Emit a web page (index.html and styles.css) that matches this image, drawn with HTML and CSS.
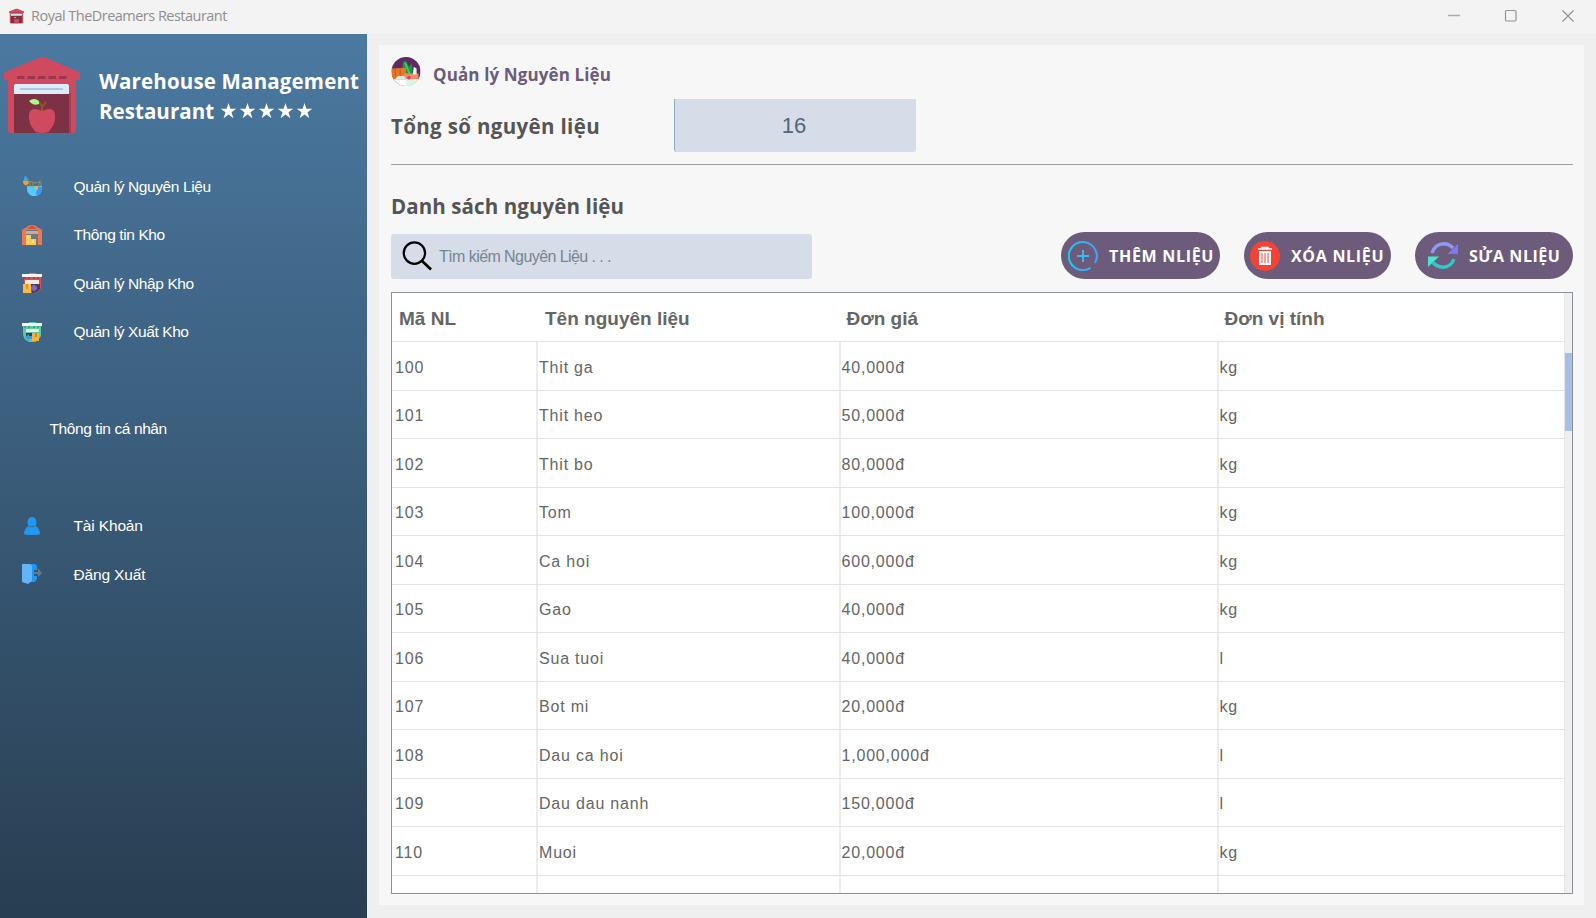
FILE: index.html
```
<!DOCTYPE html>
<html lang="vi">
<head>
<meta charset="utf-8">
<title>Royal TheDreamers Restaurant</title>
<link rel="stylesheet" href="styles.css">
</head>
<body>
<svg width="0" height="0" class="defs">
  <symbol id="store" viewBox="0 0 76 76">
    <path d="M4 20h68v53q0 3-3 3H7q-3 0-3-3z" fill="#cf4a5e"/>
    <path d="M37 0h3L73 14q3 1 3 3v4q0 2-3 2H3q-3 0-3-2v-4q0-2 3-3z" fill="#cf4a5e"/>
    <path d="M13 20.500h50" stroke="#9a394d" stroke-width="3" stroke-dasharray="7.500 3"/>
    <path d="M10 30h55v46H10z" fill="#7d3144"/>
    <path d="M65 36h2v40h-2z" fill="#a83d51"/>
    <path d="M10 37v-8q0-2 2-2h51q2 0 2 2v8z" fill="#dcecfa"/>
    <path d="M16 32h43" stroke="#afcae0" stroke-width="2"/>
    <path d="M38 54v-5l-3-4M38 50l4-5" fill="none" stroke="#8d5a26" stroke-width="2"/>
    <path d="M25 44q5-4 10 0v3q-5 2-8-1z" fill="#a5fa83"/>
    <path d="M38 54q11-5 13 3 1 9-5 16-1 3-8 3t-8-3q-6-7-5-16 2-8 13-3z" fill="#cf4a5e"/>
  </symbol>
</svg>
<header class="titlebar">
  <svg class="app-icon" viewBox="0 0 76 76"><use href="#store"/></svg>
  <span class="app-title">Royal TheDreamers Restaurant</span>
  <div class="controls">
    <svg viewBox="0 0 14 14"><path d="M1 6.500h12" stroke="#aaa" stroke-width="1.500"/></svg>
    <svg viewBox="0 0 14 14"><rect x="1.500" y="1.500" width="10.500" height="10.500" rx="1.200" fill="none" stroke="#949494" stroke-width="1.200"/></svg>
    <svg viewBox="0 0 14 14"><path d="M1.500 1.500l11 11M12.500 1.500l-11 11" stroke="#909090" stroke-width="1.100"/></svg>
  </div>
</header>
<div class="app">
  <aside class="sidebar">
    <div class="brand">
      <svg class="logo" viewBox="0 0 76 76"><use href="#store"/></svg>
      <div class="brand-text"><div class="b1">Warehouse Management</div><div class="b2">Restaurant <svg class="stars" viewBox="0 0 91 16"><defs><path id="star" d="M7.500 0l1.900 5.800h5.900L10.500 9.300l1.900 5.900-4.900-3.600-4.900 3.600 1.900-5.900L-.3 5.800h5.900z" fill="#fff"/></defs><use href="#star"/><use href="#star" x="19"/><use href="#star" x="38"/><use href="#star" x="57"/><use href="#star" x="76"/></svg></div></div>
    </div>
    <nav class="menu">
      <a class="item"><svg viewBox="0 0 20 20"><path d="M5 10h15v3q-1 6-6 7H10q-5-2-5-7z" fill="#55c8fc"/><path d="M16 11h4q1 5-5 9-2-4 1-9z" fill="#3797f5"/><path d="M6 5l8 2 5-2M8 6v5M11 6v5M18 5l-2 6M19 6v4" fill="none" stroke="#9b8c62"/><path d="M1 5q2-2 5 0l1 2q-2 3-4 2Q1 8 1 5z" fill="#f6a313"/><path d="M2 5V2q0-2 2-2l3 4z" fill="#35a5e8"/><path d="M13 10h3v3l-1 1q-2 0-2-2z" fill="#f5b13a"/></svg><span>Quản lý Nguyên Liệu</span></a>
      <a class="item"><svg viewBox="0 0 20 20"><path d="M0 5l8-5h4l8 5v15H0z" fill="#f0784f"/><path d="M5 4l5-4 5 4z" fill="#d8503a"/><path d="M4 5h12v15H4z" fill="#6f7780"/><path d="M4 6h12v3H4z" fill="#c8ac98"/><path d="M4 10h5v4h5v6H4z" fill="#f8ca58"/><path d="M6 11v3M11 15v3M6 16v2" stroke="#fff09a"/></svg><span>Thông tin Kho</span></a>
      <a class="item"><svg viewBox="0 0 20 20"><path d="M2 2h17v13q-2 4-6 5H2z" fill="#e24a61"/><path d="M0 1h20v3H0z" fill="#f3f3ef"/><path d="M7 0h7v1H7z" fill="#52b796"/><path d="M3 4v2M7 4v2M12 4v2M16 4v2" stroke="#7b3848"/><path d="M3 7h14v4H3z" fill="#f4ece4"/><path d="M9 11h9v5q-3 4-8 4z" fill="#404254"/><path d="M1 11h8v9H1z" fill="#f7bd43"/><path d="M5 11v5" stroke="#e78a28" stroke-width="2"/><path d="M9 15h6M12 12v6" stroke="#8166c6" stroke-width="3"/></svg><span>Quản lý Nhập Kho</span></a>
      <a class="item"><svg viewBox="0 0 20 20"><path d="M1 2h18v12q-2 4-6 6H7q-6-3-6-8z" fill="#59cda0"/><path d="M0 1h20v3H0z" fill="#f3f7f3"/><path d="M7 0h7v1H7z" fill="#4dcfa3"/><path d="M3 4v2M7 4v2M12 4v2M16 4v2" stroke="#347a66"/><path d="M4 7h13v3H4z" fill="#f2eee2"/><path d="M4 11h13v5H4z" fill="#373c4c"/><path d="M10 11h7v8h-7z" fill="#f7b13e"/><path d="M14 11v4" stroke="#df8324" stroke-width="2"/><path d="M3 15l4-3v2h3v3H7v2z" fill="#319be4"/></svg><span>Quản lý Xuất Kho</span></a>
      <div class="label">Thông tin cá nhân</div>
      <a class="item account"><svg viewBox="0 0 20 20"><path d="M10 1q4 0 4.500 5 0 4-2.500 4.500H8Q5.500 10 5.500 6 6 1 10 1zM6 10q4 2.500 8 0 4 3 4 8 0 1-8 1t-8-1q0-5 4-8z" fill="#2196f3"/></svg><span>Tài Khoản</span></a>
      <a class="item account"><svg viewBox="0 0 20 20"><path d="M6 0h7l2 2v4h-3v6h3v3l-2 3H6z" fill="#2196f3"/><path d="M0 0h7q3 0 3 3v14l-4 3-6-2z" fill="#64b5f6"/><path d="M11 8h5V4l4 5-4 4v-3h-5z" fill="#607d8b"/></svg><span>Đăng Xuất</span></a>
    </nav>
  </aside>
  <main class="panel">
    <div class="heading">
      <svg viewBox="0 0 30 30"><defs><clipPath id="disc"><circle cx="15" cy="15" r="15"/></clipPath></defs><g clip-path="url(#disc)"><path d="M0 0h30v30H0z" fill="#5e2a62"/><path d="M11 13L12 5l3-1 3 6 3-3 1 10-8 2z" fill="#159a42"/><path d="M14 6l5 12" stroke="#3fca61" stroke-width="2"/><path d="M0 12l15-1v12H0z" fill="#e77622"/><path d="M4 12v8M9 12v8" stroke="#ca5720"/><path d="M13 17h15v6H13z" fill="#f58b63"/><path d="M23 10l3 2v6h-4z" fill="#e8f0f4"/><path d="M0 23h30v7H0z" fill="#fff"/><path d="M15 23h15v7H15z" fill="#d8f7e9"/><path d="M4 23q3-5 6-3 3-2 5 3z" fill="#d4eee8"/><circle cx="18" cy="21.500" r="1.800" fill="#ef315d"/></g></svg>
      <h1>Quản lý Nguyên Liệu</h1>
    </div>
    <div class="total"><h2>Tổng số nguyên liệu</h2><div class="count">16</div></div>
    <h2 class="list-title">Danh sách nguyên liệu</h2>
    <div class="tools">
      <div class="search"><svg viewBox="0 0 32 32"><circle cx="12.800" cy="12.500" r="11" fill="none" stroke="#000" stroke-width="2.300"/><path d="M20.500 20.500l9.500 9" stroke="#000" stroke-width="2.800"/></svg><span>Tìm kiếm Nguyên Liệu . . .</span></div>
      <button class="btn add"><svg viewBox="0 0 30 30"><defs><linearGradient id="ring"><stop stop-color="#13d2ed"/><stop offset="1" stop-color="#4a9ffb"/></linearGradient></defs><path d="M22.500 26.800A14 14 0 1 1 27 22" fill="none" stroke="url(#ring)" stroke-width="2"/><path d="M9 15h12M15 9v12" stroke="#3fb7f7" stroke-width="2"/></svg><span>THÊM NLIỆU</span></button>
      <button class="btn del"><svg viewBox="0 0 30 30"><circle cx="15" cy="15" r="15" fill="#f44336"/><path d="M8 8h14M12 8V6.500h6V8" fill="none" stroke="#fff" stroke-width="1.600"/><path d="M9 10h12v14H9z" fill="#fff"/><path d="M12 12v10M15 12v10M18 12v10" stroke="#f44336"/></svg><span>XÓA NLIỆU</span></button>
      <button class="btn edit"><svg viewBox="0 0 30 30"><path d="M4 12Q7 3 16 2.800q5 0 9 4.200" fill="none" stroke="#8f9bf2" stroke-width="3.400"/><path d="M30 3v10H19.500z" fill="#7d78f8"/><path d="M26 18Q23 26 15 26.200 9 26 5 21.500" fill="none" stroke="#2ecbc9" stroke-width="3.400"/><path d="M0 15.500h11L0 26z" fill="#43e6cf"/></svg><span>SỬA NLIỆU</span></button>
    </div>
    <div class="table-box">
      <div class="table">
        <div class="row head"><div>Mã NL</div><div>Tên nguyên liệu</div><div>Đơn giá</div><div>Đơn vị tính</div></div>
        <div class="row"><div>100</div><div>Thit ga</div><div>40,000đ</div><div>kg</div></div>
        <div class="row"><div>101</div><div>Thit heo</div><div>50,000đ</div><div>kg</div></div>
        <div class="row"><div>102</div><div>Thit bo</div><div>80,000đ</div><div>kg</div></div>
        <div class="row"><div>103</div><div>Tom</div><div>100,000đ</div><div>kg</div></div>
        <div class="row"><div>104</div><div>Ca hoi</div><div>600,000đ</div><div>kg</div></div>
        <div class="row"><div>105</div><div>Gao</div><div>40,000đ</div><div>kg</div></div>
        <div class="row"><div>106</div><div>Sua tuoi</div><div>40,000đ</div><div>l</div></div>
        <div class="row"><div>107</div><div>Bot mi</div><div>20,000đ</div><div>kg</div></div>
        <div class="row"><div>108</div><div>Dau ca hoi</div><div>1,000,000đ</div><div>l</div></div>
        <div class="row"><div>109</div><div>Dau dau nanh</div><div>150,000đ</div><div>l</div></div>
        <div class="row"><div>110</div><div>Muoi</div><div>20,000đ</div><div>kg</div></div>
        <div class="row"><div></div><div></div><div></div><div></div></div>
      </div>
      <div class="scrollbar"><div class="thumb"></div></div>
    </div>
  </main>
</div>
</body>
</html>
```
FILE: styles.css
```
* { box-sizing: border-box; }
body { margin: 0; width: 1596px; height: 918px; overflow: hidden; background: #efefef; font-family: "Liberation Sans", Arial, sans-serif; display: flex; flex-direction: column; }
svg { display: block; flex: none; }
.defs { position: absolute; }
h1, h2 { margin: 0; font-family: "Open Sans", "Noto Sans", sans-serif; font-weight: 700; white-space: nowrap; }
.titlebar { height: 34px; flex: none; background: #f3f3f3; display: flex; align-items: center; padding: 0 21px 2px 9px; }
.app-icon { width: 15px; height: 16px; }
.app-title { margin: -1px 0 0 7px; font: 14.5px "Open Sans", sans-serif; letter-spacing: -.52px; color: #8f8f8f; }
.controls { margin-left: auto; display: flex; gap: 43px; }
.controls svg { width: 14px; height: 14px; }
.app { flex: 1; min-height: 0; display: flex; }
.sidebar { width: 367px; flex: none; background: linear-gradient(#4b79a1, #283e51); color: #fff; }
.brand { height: 128px; display: flex; padding: 23px 0 0 4px; }
.logo { width: 76px; height: 76px; }
.brand-text { margin: 9px 0 0 19px; font: 700 20.5px/30px "Open Sans", "Noto Sans", sans-serif; white-space: nowrap; }
.b1 { letter-spacing: .17px; }
.b2 { letter-spacing: .05px; display: flex; align-items: center; gap: 7px; }
.stars { width: 91px; height: 16px; overflow: visible; }
.menu { font-size: 15.5px; letter-spacing: -.4px; }
.item { height: 48.5px; display: flex; align-items: center; padding-left: 22px; }
.item svg { width: 20px; height: 20px; }
.item span { margin: 1px 0 0 31.5px; }
.account { letter-spacing: -.15px; }
.label { height: 145.5px; display: flex; align-items: center; padding-left: 49.5px; }
.panel { flex: 1; margin: 11px 12px 13px; padding: 0 11px 0 12px; background: #f7f7f7; }
.panel > * { width: 1182px; }
.heading { height: 54px; display: flex; padding-top: 12px; }
.heading svg { width: 30px; height: 29px; }
h1 { margin-left: 12px; font-size: 17px; line-height: 36px; letter-spacing: .12px; color: #6c5b7b; }
.total { height: 66px; display: flex; border-bottom: 1px solid #a0a0a0; }
h2 { width: 283px; font-size: 20.5px; line-height: 55px; letter-spacing: .35px; color: #555; }
.count { width: 242px; height: 53px; background: #d6dce8; border-left: 1px solid #8fabc9; border-radius: 0 0 3px 3px; padding-right: 3px; text-align: center; font-size: 22px; line-height: 54px; color: #506878; }
.list-title { height: 67px; font-size: 20.500px; line-height: 83px; letter-spacing: .1px; }
.tools { height: 60px; display: flex; align-items: flex-start; }
.search { width: 421px; height: 45px; margin: 2px 249px 0 0; padding-left: 11px; display: flex; align-items: center; background: #d6dce8; border-radius: 3px; }
.search svg { width: 31px; height: 31px; }
.search span { margin: 1px 0 0 6px; font-size: 16px; letter-spacing: -.57px; color: #758694; }
.btn { height: 47px; border: 0; border-radius: 24px; margin: 0; padding: 0 0 0 7px; display: flex; align-items: center; background: #6c5b7b; color: #fff; font: 700 16px "Open Sans", "Noto Sans", sans-serif; letter-spacing: .7px; white-space: nowrap; }
.btn svg { width: 30px; height: 30px; }
.btn span { margin: 1px 0 0 11px; }
.add { width: 159px; }
.del { width: 147px; margin-left: 24px; padding-left: 6px; }
.edit { width: 158px; margin-left: 24px; padding-left: 13px; letter-spacing: .55px; }
.table-box { height: 602px; border: 1px solid #8c9299; display: flex; background: #fff; overflow: hidden; }
.table { flex: 1; border-right: 1px solid #e6e6e6; }
.row { height: 48.5px; display: grid; grid-template-columns: 146px 302.5px 378px 1fr; border-bottom: 1px solid #e4e4e4; font-size: 16px; letter-spacing: .8px; color: #666; }
.row > div { display: flex; align-items: center; padding: 4px 0 0 1px; border-right: 2px solid #ececec; }
.row > div:first-child { padding-left: 3px; }
.row > div:last-child { border-right: 0; }
.head { height: 49px; font-size: 19px; font-weight: 700; letter-spacing: 0; }
.head > div { border: 0; padding: 4px 0 0 6px; }
.head > div:nth-child(2) { padding-left: 7px; }
.head > div:first-child { padding-left: 7px; }
.scrollbar { width: 7px; background: #efefef; padding-top: 60px; }
.thumb { height: 78px; background: #a9bfe8; }
```
